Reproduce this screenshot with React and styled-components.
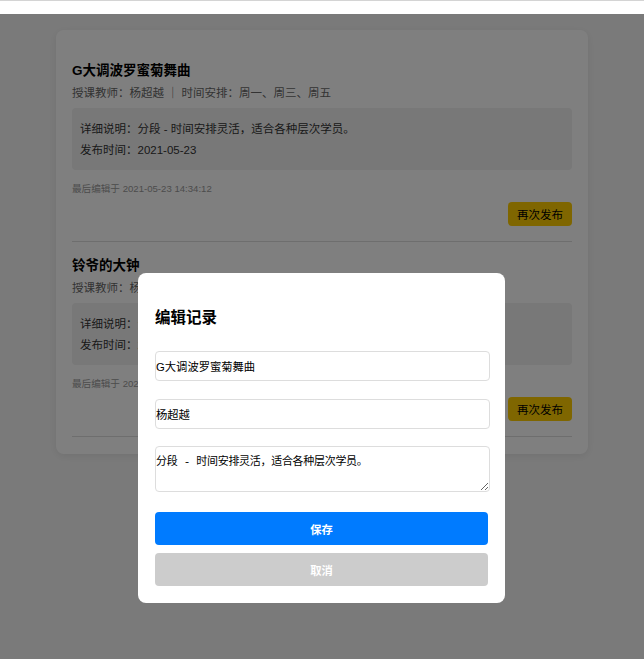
import React, { useState } from 'react';
import styled, { createGlobalStyle } from 'styled-components';

const GlobalStyle = createGlobalStyle`
  html, body {
    margin: 0;
    padding: 0;
    background: #ffffff;
  }
  body {
    font-family: "Liberation Sans", "Noto Sans CJK SC", sans-serif;
  }
  * {
    box-sizing: border-box;
  }
`;

const records = [
  {
    id: 1,
    title: 'G大调波罗蜜菊舞曲',
    teacher: '杨超越',
    schedule: '周一、周三、周五',
    detail: '分段 - 时间安排灵活，适合各种层次学员。',
    date: '2021-05-23',
    edited: '2021-05-23 14:34:12',
  },
  {
    id: 2,
    title: '铃爷的大钟',
    teacher: '杨超越',
    schedule: '周二、周四',
    detail: '分段 - 时间安排灵活，适合各种层次学员。',
    date: '2021-05-23',
    edited: '2021-05-23 14:34:12',
  },
];

function App() {
  const [draft, setDraft] = useState({
    title: records[0].title,
    teacher: records[0].teacher,
    detail: records[0].detail,
  });

  const handleChange = e => {
    setDraft({ ...draft, [e.target.name]: e.target.value });
  };

  return (
    <>
      <GlobalStyle />
      <TopBar />
      <Page>
        <Card>
          {records.map(item => (
            <Item key={item.id}>
              <Title>{item.title}</Title>
              <Meta>
                授课教师：{item.teacher}
                <Sep>｜</Sep>
                时间安排：{item.schedule}
              </Meta>
              <DetailBox>
                <DetailLine>详细说明：{item.detail}</DetailLine>
                <DetailLine>发布时间：{item.date}</DetailLine>
              </DetailBox>
              <Edited>最后编辑于 {item.edited}</Edited>
              <Actions>
                <RepublishButton>再次发布</RepublishButton>
              </Actions>
            </Item>
          ))}
        </Card>
      </Page>

      <Overlay>
        <Modal>
          <ModalTitle>编辑记录</ModalTitle>
          <Field name="title" value={draft.title} onChange={handleChange} />
          <Field name="teacher" value={draft.teacher} onChange={handleChange} />
          <TextArea name="detail" value={draft.detail} onChange={handleChange} />
          <ModalButton>保存</ModalButton>
          <ModalButton $cancel>取消</ModalButton>
        </Modal>
      </Overlay>
    </>
  );
}

const TopBar = styled.div`
  height: 14px;
  background: #ffffff;
  border-top: 1px solid #d4d4d4;
`;

const Page = styled.main`
  min-height: 645px;
  background: #f5f5f5;
  padding: 16px 0;
`;

const Card = styled.section`
  width: 532px;
  margin: 0 auto;
  background: #ffffff;
  border-radius: 8px;
  padding: 17px 16px 17px;
  box-shadow: 0 2px 8px rgba(0, 0, 0, 0.08);
`;

const Item = styled.article`
  border-bottom: 1px solid #dcdcdc;
  padding: 0 0 15px;
`;

const Title = styled.h3`
  margin: 16px 0 6px;
  font-size: 13.5px;
  line-height: 16px;
  font-weight: bold;
  color: #000;
`;

const Meta = styled.p`
  margin: 0 0 6px;
  font-size: 11.5px;
  line-height: 17px;
  color: #666;
`;

const Sep = styled.span`
  margin: 0 3px;
  color: #666;
`;

const DetailBox = styled.div`
  background: #f0f0f0;
  border-radius: 4px;
  padding: 11px 8px 9px;
`;

const DetailLine = styled.p`
  margin: 0;
  font-size: 11.5px;
  line-height: 21px;
  color: #333;
`;

const Edited = styled.p`
  margin: 13px 0 0;
  font-size: 9.6px;
  line-height: 12px;
  color: #999;
`;

const Actions = styled.div`
  display: flex;
  justify-content: flex-end;
  margin-top: 7px;
`;

const RepublishButton = styled.button`
  height: 24px;
  padding: 0 9px;
  border: none;
  border-radius: 4px;
  background: #ffcc00;
  color: #000;
  font-family: inherit;
  font-size: 11.5px;
  cursor: pointer;
`;

const Overlay = styled.div`
  position: fixed;
  top: 14px;
  left: 0;
  right: 0;
  bottom: 0;
  background: rgba(0, 0, 0, 0.5);
  display: flex;
  justify-content: center;
  align-items: flex-start;
  padding: 259px 1px 0 0;
`;

const Modal = styled.div`
  width: 367px;
  background: #ffffff;
  border-radius: 8px;
  padding: 17px;
  display: flex;
  flex-direction: column;
`;

const ModalTitle = styled.h3`
  margin: 19px 0 24px;
  font-size: 15.5px;
  line-height: 18px;
  font-weight: bold;
  color: #000;
`;

const Field = styled.input`
  width: 335px;
  height: 30px;
  margin: 0 0 17.5px;
  padding: 0;
  border: 1px solid #dddddd;
  border-radius: 4px;
  font-family: inherit;
  font-size: 11.3px;
  color: #000;
  outline: none;
`;

const TextArea = styled.textarea`
  width: 335px;
  height: 46px;
  margin: 0 0 20px;
  padding: 8px 0 0;
  border: 1px solid #dddddd;
  border-radius: 4px;
  font-family: "Liberation Mono", "Noto Sans CJK SC", monospace;
  font-size: 11px;
  line-height: 14px;
  letter-spacing: -0.3px;
  color: #000;
  outline: none;
`;

const ModalButton = styled.button`
  width: 333px;
  height: 33px;
  margin-bottom: ${p => (p.$cancel ? '0' : '8px')};
  border: none;
  border-radius: 4px;
  background: ${p => (p.$cancel ? '#cccccc' : '#007bff')};
  color: #ffffff;
  font-family: inherit;
  font-size: 11.3px;
  font-weight: bold;
  cursor: pointer;
`;

export default App;
